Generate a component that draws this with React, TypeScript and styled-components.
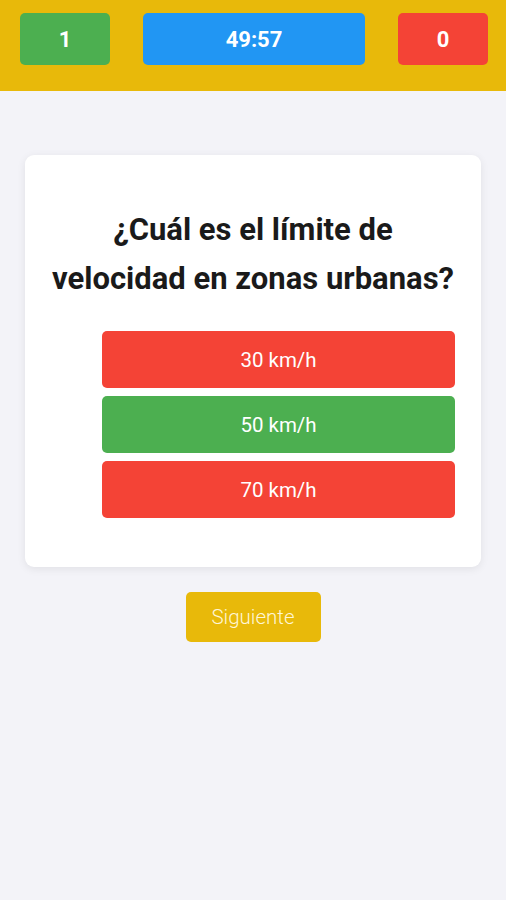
import React from "react";
import styled, { createGlobalStyle } from "styled-components";

const Global = createGlobalStyle`
  html, body { margin: 0; padding: 0; background: #f3f3f8; }
  body { font-family: Roboto, "Noto Sans", Arial, sans-serif; }
  * { box-sizing: border-box; }
`;

const Page = styled.div`
  width: 506px;
  min-height: 900px;
  background: #f3f3f8;
`;

const TopBar = styled.header`
  height: 91px;
  background: #e8b90a;
  display: flex;
  align-items: flex-start;
  justify-content: space-between;
  padding: 13px 18px 0 20px;
`;

const Stat = styled.div<{ $bg: string; $w: number }>`
  width: ${(p) => p.$w}px;
  height: 52px;
  background: ${(p) => p.$bg};
  border-radius: 5px;
  color: #fff;
  font-weight: 700;
  font-size: 22px;
  display: flex;
  align-items: center;
  justify-content: center;
`;

const Main = styled.main`
  display: flex;
  flex-direction: column;
  align-items: center;
  padding-top: 64px;
`;

const Card = styled.section`
  width: 456px;
  background: #fff;
  border-radius: 9px;
  box-shadow: 0 2px 8px rgba(0, 0, 0, 0.08);
  padding: 50px 26px 49px 26px;
`;

const Question = styled.h2`
  margin: 0 0 28px;
  text-align: center;
  font-size: 31px;
  font-weight: 700;
  line-height: 49px;
  color: #1a1a1a;
`;

const Options = styled.div`
  display: flex;
  flex-direction: column;
  gap: 8px;
  padding-left: 51px;
`;

const Option = styled.button<{ $bg: string }>`
  height: 57px;
  border: none;
  border-radius: 5px;
  background: ${(p) => p.$bg};
  color: #fff;
  font-family: Roboto, "Noto Sans", Arial, sans-serif;
  font-size: 20.5px;
  font-weight: 400;
  display: flex;
  align-items: center;
  justify-content: center;
  padding: 0;
`;

const NextButton = styled.button`
  margin-top: 25px;
  width: 135px;
  height: 50px;
  border: none;
  border-radius: 5px;
  background: #e8b90a;
  color: #fff6d6;
  font-family: Roboto, "Noto Sans", Arial, sans-serif;
  font-size: 20.5px;
  font-weight: 300;
`;

const GREEN = "#4caf50";
const RED = "#f44336";
const BLUE = "#2196f3";

export default function App() {
  const options = [
    { label: "30 km/h", color: RED },
    { label: "50 km/h", color: GREEN },
    { label: "70 km/h", color: RED },
  ];
  return (
    <Page>
      <Global />
      <TopBar>
        <Stat $bg={GREEN} $w={90}>1</Stat>
        <Stat $bg={BLUE} $w={222}>49:57</Stat>
        <Stat $bg={RED} $w={90}>0</Stat>
      </TopBar>
      <Main>
        <Card>
          <Question>
            ¿Cuál es el límite de
            <br />
            velocidad en zonas urbanas?
          </Question>
          <Options>
            {options.map((o) => (
              <Option key={o.label} $bg={o.color}>
                {o.label}
              </Option>
            ))}
          </Options>
        </Card>
        <NextButton>Siguiente</NextButton>
      </Main>
    </Page>
  );
}
